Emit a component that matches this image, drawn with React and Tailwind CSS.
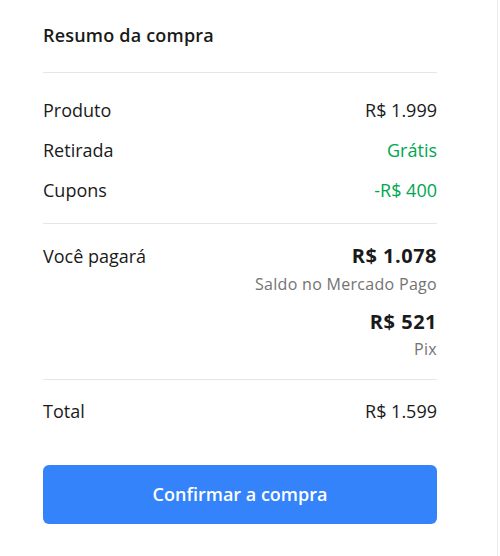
export default function App() {
  const font = { fontFamily: '"Open Sans", "Liberation Sans", sans-serif' };
  return (
    <div className="w-[500px] h-[556px] bg-white flex" style={font}>
      <div className="w-[498px] h-full border-r border-[#ececec] pl-[43px] pr-[60px] pt-[23px]">
        <h2 className="text-[18px] leading-[24px] font-semibold tracking-[0.2px] text-[#1a1a1a]">Resumo da compra</h2>
        <div className="mt-[25px] h-px bg-[#e6e6e6]" />
        <div className="mt-[25px] flex flex-col gap-[16px] text-[18px] leading-[24px] text-[#1a1a1a]">
          <div className="flex justify-between">
            <span>Produto</span>
            <span>R$ 1.999</span>
          </div>
          <div className="flex justify-between">
            <span>Retirada</span>
            <span className="text-[#00a650]">Grátis</span>
          </div>
          <div className="flex justify-between">
            <span>Cupons</span>
            <span className="text-[#00a650]">-R$ 400</span>
          </div>
        </div>
        <div className="mt-[21px] h-px bg-[#e6e6e6]" />
        <div className="mt-[20px] flex justify-between text-[#1a1a1a]">
          <span className="text-[18px] leading-[24px]">Você pagará</span>
          <div className="flex flex-col items-end">
            <span className="text-[20px] leading-[24px] font-bold tracking-[0.5px]">R$ 1.078</span>
            <span className="mt-[7px] text-[16px] leading-[18px] tracking-[0.3px] text-[#737373]">Saldo no Mercado Pago</span>
            <span className="mt-[17px] text-[20px] leading-[24px] font-bold tracking-[0.5px]">R$ 521</span>
            <span className="mt-[6px] text-[16px] leading-[18px] tracking-[0.3px] text-[#737373]">Pix</span>
          </div>
        </div>
        <div className="mt-[21px] h-px bg-[#e6e6e6]" />
        <div className="mt-[19px] flex justify-between text-[18px] leading-[24px] text-[#1a1a1a]">
          <span>Total</span>
          <span>R$ 1.599</span>
        </div>
        <button className="mt-[42px] w-full h-[59px] rounded-[6px] bg-[#3483fa] text-white text-[18px] font-semibold">
          Confirmar a compra
        </button>
      </div>
    </div>
  );
}
